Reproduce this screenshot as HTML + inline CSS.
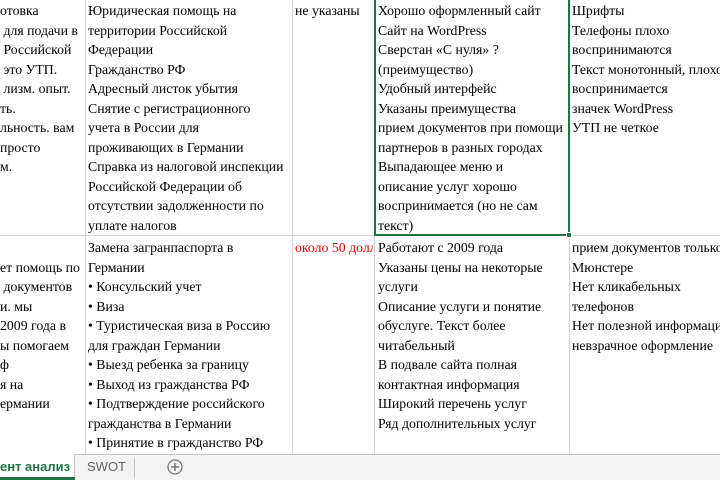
<!DOCTYPE html>
<html><head><meta charset="utf-8"><style>
*{margin:0;padding:0;box-sizing:border-box}
body{width:720px;height:480px;overflow:hidden;background:#fff;position:relative;font-family:"Liberation Serif","DejaVu Serif",serif;font-size:13.8px;color:#000}
.c{position:absolute;overflow:hidden;line-height:19.5px;white-space:nowrap}
.v{position:absolute;top:0;width:1px;height:454px;background:#d4d4d4}
.h{position:absolute;left:0;width:720px;height:1px;background:#d4d4d4}
</style></head><body>
<div class="v" style="left:85px"></div>
<div class="v" style="left:292px"></div>
<div class="v" style="left:374px"></div>
<div class="v" style="left:569px"></div>
<div class="h" style="top:235px"></div>

<div class="c" style="left:0;top:1px;width:84px">отовка<br>&nbsp;для подачи в<br>&nbsp;Российской<br>&nbsp;это УТП.<br>&nbsp;лизм. опыт.<br>ть.<br>льность. вам<br>просто<br>м.</div>
<div class="c" style="left:88px;top:1px;width:203px">Юридическая помощь на<br>территории Российской<br>Федерации<br>Гражданство РФ<br>Адресный листок убытия<br>Снятие с регистрационного<br>учета в России для<br>проживающих в Германии<br>Справка из налоговой инспекции<br>Российской Федерации об<br>отсутствии задолженности по<br>уплате налогов</div>
<div class="c" style="left:295px;top:1px;width:78px">не указаны</div>
<div class="c" style="left:378px;top:1px;width:190px">Хорошо оформленный сайт<br>Сайт на WordPress<br>Сверстан «С нуля» ?<br>(преимущество)<br>Удобный интерфейс<br>Указаны преимущества<br>прием документов при помощи<br>партнеров в разных городах<br>Выпадающее меню и<br>описание услуг хорошо<br>воспринимается (но не сам<br>текст)</div>
<div class="c" style="left:572px;top:1px;width:148px">Шрифты<br>Телефоны плохо<br>воспринимаются<br>Текст монотонный, плохо<br>воспринимается<br>значек WordPress<br>УТП не четкое</div>

<div class="c" style="left:0;top:238px;width:84px"><br>ет помощь по<br>&nbsp;документов<br>и. мы<br>2009 года в<br>ы помогаем<br>ф<br>я на<br>ермании</div>
<div class="c" style="left:88px;top:238px;width:203px">Замена загранпаспорта в<br>Германии<br>• Консульский учет<br>• Виза<br>• Туристическая виза в Россию<br>для граждан Германии<br>• Выезд ребенка за границу<br>• Выход из гражданства РФ<br>• Подтверждение российского<br>гражданства в Германии<br>• Принятие в гражданство РФ</div>
<div class="c" style="left:295px;top:238px;width:78px;color:#e00000">около 50 долл</div>
<div class="c" style="left:378px;top:238px;width:190px">Работают с 2009 года<br>Указаны цены на некоторые<br>услуги<br>Описание услуги и понятие<br>обуслуге. Текст более<br>читабельный<br>В подвале сайта полная<br>контактная информация<br>Широкий перечень услуг<br>Ряд дополнительных услуг</div>
<div class="c" style="left:572px;top:238px;width:148px">прием документов только в<br>Мюнстере<br>Нет кликабельных<br>телефонов<br>Нет полезной информации<br>невзрачное оформление</div>

<div style="position:absolute;left:374px;top:-2px;width:196px;height:238px;border:2px solid #217346"></div>
<div style="position:absolute;left:566px;top:232px;width:6px;height:6px;background:#217346;border:1px solid #fff"></div>

<div style="position:absolute;left:0;top:454px;width:720px;height:26px;background:#f3f3f3;border-top:1px solid #c6c6c6"></div>
<div style="position:absolute;left:0;top:454px;width:75px;height:26px;background:#fff;border-right:1px solid #c6c6c6"></div>
<div style="position:absolute;left:0;top:477px;width:75px;height:3px;background:#217346"></div>
<div style="position:absolute;left:0;top:459px;font-family:'Liberation Sans',sans-serif;font-size:13px;font-weight:bold;color:#217346;white-space:nowrap">ент анализ</div>
<div style="position:absolute;left:87px;top:459px;font-family:'Liberation Sans',sans-serif;font-size:13px;color:#666">SWOT</div>
<div style="position:absolute;left:134px;top:458px;width:1px;height:20px;background:#c6c6c6"></div>
<svg style="position:absolute;left:166px;top:458px" width="18" height="18" viewBox="0 0 18 18"><circle cx="9" cy="9" r="7" fill="none" stroke="#777" stroke-width="1.3"/><path d="M9 5v8M5 9h8" stroke="#777" stroke-width="1.5"/></svg>
</body></html>
